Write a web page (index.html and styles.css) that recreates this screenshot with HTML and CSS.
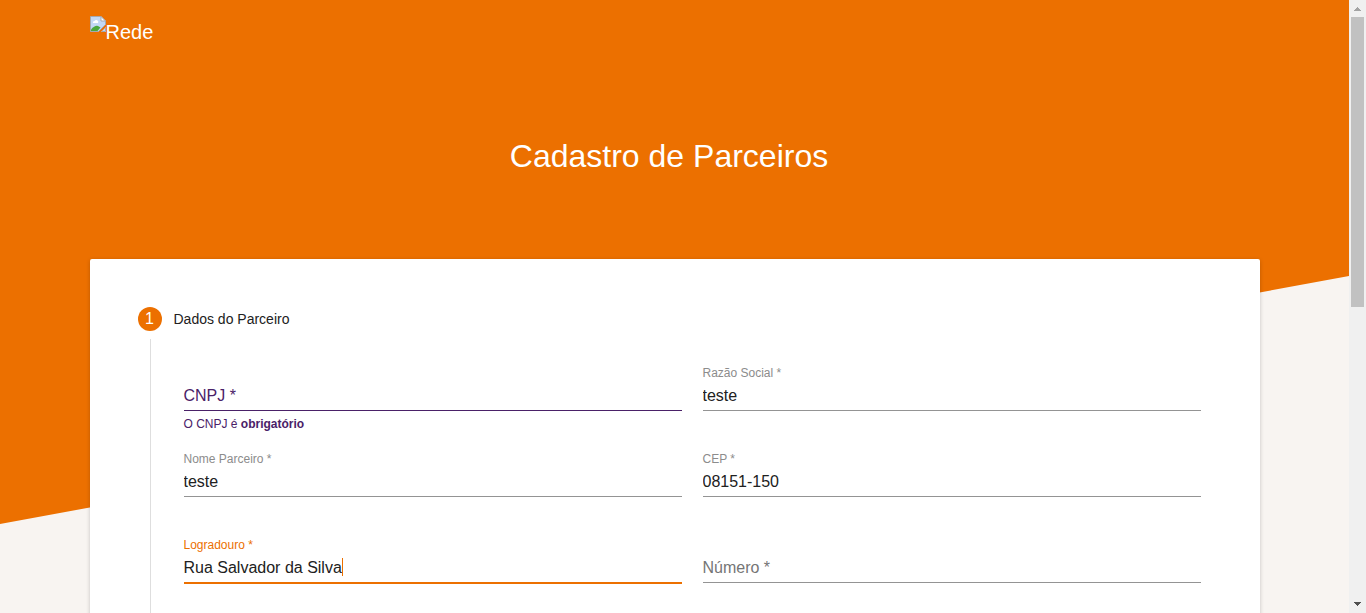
FILE: index.html
```html
<!DOCTYPE html>
<html lang="pt-BR">
<head>
<meta charset="utf-8">
<title>Cadastro de Parceiros</title>
<link rel="stylesheet" href="styles.css">
</head>
<body>
<div class="page">
  <div class="backdrop"></div>
  <header class="topbar container">
    <svg class="logo-icon" width="16" height="16" viewBox="0 0 16 16" aria-hidden="true">
      <path d="M0.500 0.500H11L15.500 5V8.500L8.500 15.500H0.500Z" fill="#c3d8f5" stroke="#a5a8b0"/>
      <path d="M11 0.500V5H15.500Z" fill="#fff" stroke="#a5a8b0"/>
      <path d="M3 7a1.500 1.500 0 0 1 1.500-2a2 2 0 0 1 3.500 2Z" fill="#fff"/>
      <path d="M1 15V13.500Q5 9 8 10L10.500 11.500L7.500 15Z" fill="#4ba83c"/>
      <path d="M11 16L16 11V16Z" fill="#c3d8f5"/>
      <path d="M11.500 15.500H15.500V11.500" fill="none" stroke="#a5a8b0"/>
    </svg>
    <span class="logo-text">Rede</span>
  </header>
  <h1 class="title">Cadastro de Parceiros</h1>
  <main class="card container">
    <div class="step">
      <span class="step-number">1</span>
      <h2 class="step-title">Dados do Parceiro</h2>
    </div>
    <form class="fields">
      <div class="field field-empty field-error">
        <label class="label" for="cnpj">CNPJ *</label>
        <input class="input" id="cnpj" type="text">
        <p class="hint">O CNPJ é <strong>obrigatório</strong></p>
      </div>
      <div class="field">
        <label class="label" for="razao">Razão Social *</label>
        <input class="input" id="razao" type="text" value="teste">
      </div>
      <div class="field">
        <label class="label" for="nome">Nome Parceiro *</label>
        <input class="input" id="nome" type="text" value="teste">
      </div>
      <div class="field">
        <label class="label" for="cep">CEP *</label>
        <input class="input" id="cep" type="text" value="08151-150">
      </div>
      <div class="field field-active">
        <label class="label" for="logradouro">Logradouro *</label>
        <input class="input" id="logradouro" type="text" value="Rua Salvador da Silva">
        <span class="caret"></span>
      </div>
      <div class="field field-empty">
        <label class="label" for="numero">Número *</label>
        <input class="input" id="numero" type="text">
      </div>
    </form>
  </main>
</div>
<div class="scrollbar" aria-hidden="true">
  <svg class="arrow" width="17" height="17" viewBox="0 0 17 17" shape-rendering="crispEdges"><path d="M8 7h1v1h1v1h1v1h1v1H5v-1h1V9h1V8h1Z" fill="#a3a3a3"/></svg>
  <div class="track"><div class="thumb"></div></div>
  <svg class="arrow" width="17" height="17" viewBox="0 0 17 17" shape-rendering="crispEdges"><path d="M5 6h7v1h-1v1h-1v1H9v1H8V9H7V8H6V7H5Z" fill="#505050"/></svg>
</div>
</body>
</html>
```
FILE: styles.css
```css
* {
  box-sizing: border-box;
}

body {
  margin: 0;
  height: 100vh;
  display: flex;
  overflow: hidden;
  background: #f8f4f1;
  color: #212121;
  font-family: "Liberation Sans", Arial, sans-serif;
}

.page {
  position: relative;
  flex: 1;
  overflow: hidden;
}

.backdrop {
  position: absolute;
  inset: 0 0 auto;
  height: 524px;
  background: #ec7000;
  clip-path: polygon(0 0, 100% 0, 100% 276px, 0 100%);
}

.container {
  position: relative;
  width: calc(100% - 32px);
  max-width: 1170px;
  margin: 0 auto;
}

.topbar {
  display: flex;
  align-items: flex-start;
  height: 64px;
  padding-top: 16px;
  color: #fff;
}

.logo-text {
  font-size: 20px;
  line-height: 32px;
}

.title {
  position: relative;
  margin: 72px 0 83px;
  padding-right: 11px;
  color: #fff;
  font-size: 32px;
  font-weight: 400;
  line-height: 40px;
  text-align: center;
}

.card {
  min-height: 100vh;
  padding: 48px;
  background: #fff;
  border-radius: 2px;
  box-shadow: 0 1px 4px rgba(0, 0, 0, 0.2);
}

.step {
  display: flex;
  align-items: center;
  gap: 12px;
}

.step-number {
  width: 24px;
  height: 24px;
  border-radius: 50%;
  background: #ec7000;
  color: #fff;
  font-size: 16px;
  line-height: 24px;
  text-align: center;
}

.step-title {
  margin: 0;
  font-size: 14px;
  font-weight: 400;
  line-height: 24px;
}

.fields {
  display: grid;
  grid-template-columns: 1fr 1fr;
  grid-auto-rows: minmax(86px, auto);
  column-gap: 21px;
  margin: 8px 0 0 12px;
  padding: 25px 11px 48px 33px;
  border-left: 1px solid #dedede;
}

.field {
  position: relative;
  padding-top: 16px;
}

.label {
  position: absolute;
  top: 0;
  left: 0;
  color: #8c8c8c;
  font-size: 12px;
  line-height: 18px;
}

.input {
  display: block;
  width: 100%;
  height: 31px;
  padding: 2px 0 0;
  border: 0;
  border-bottom: 1px solid #949494;
  border-radius: 0;
  outline: 0;
  background: transparent;
  color: #212121;
  font: 16px "Liberation Sans", Arial, sans-serif;
}

.hint {
  margin: 4px 0 0;
  font-size: 12px;
  line-height: 18px;
}

.field-empty .label {
  top: 16px;
  color: #757575;
  font-size: 16px;
  line-height: 32px;
}

.field-error .label,
.field-error .hint {
  color: #4a2168;
}

.field-error .input {
  border-color: #4a2168;
}

.field-active .label {
  color: #ec7000;
}

.field-active .input {
  height: 32px;
  border-bottom: 2px solid #ec7000;
}

.caret {
  position: absolute;
  top: 22px;
  left: 158px;
  width: 1px;
  height: 18px;
  background: #ec7000;
}

.scrollbar {
  display: flex;
  flex-direction: column;
  width: 17px;
  background: #f0f0f0;
}

.arrow {
  display: block;
}

.track {
  flex: 1;
  padding: 0 2px;
}

.thumb {
  height: 50%;
  background: #c1c1c1;
}
```
